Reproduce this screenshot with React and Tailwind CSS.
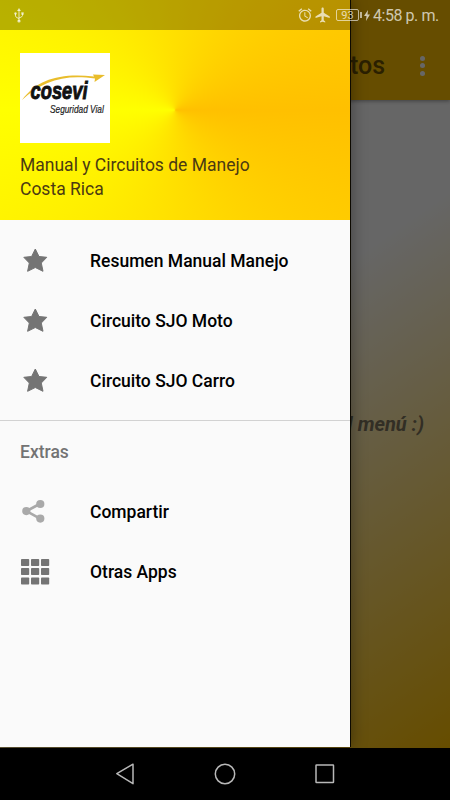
const menuItems = ['Resumen Manual Manejo', 'Circuito SJO Moto', 'Circuito SJO Carro']

export default function App() {
    return (
        <div className="relative flex h-[800px] w-[450px] flex-col overflow-hidden bg-black font-['Roboto',sans-serif]">
            <MainScreen />
            <Drawer />
            <StatusBar />
            <NavigationBar />
        </div>
    )
}

/** Activity behind the drawer, dimmed by the scrim. */
const MainScreen = () => (
    <div className="relative flex h-[748px] flex-col">
        <header className="relative z-10 flex h-[100px] items-center justify-end gap-[35px] bg-[#ffc000] pt-[31px] pr-[25px] shadow-[0_1px_4px_rgba(0,0,0,0.4)]">
            <span className="pt-px text-[25px] font-medium text-[#6b5000]">tos</span>
            <div className="flex flex-col gap-[2.5px]">
                <i className="size-[5px] rounded-full bg-white" />
                <i className="size-[5px] rounded-full bg-white" />
                <i className="size-[5px] rounded-full bg-white" />
            </div>
        </header>
        <main className="flex flex-1 items-center justify-end bg-[linear-gradient(145.2deg,#fff_0%,#fff_42%,#ffc000_100%)] pr-[26px]">
            <p className="text-[20px] font-bold italic text-[#7d745c]">l menú :)</p>
        </main>
        <div className="absolute inset-0 z-20 bg-black/60" />
    </div>
)

const Drawer = () => (
    <aside className="absolute top-0 left-0 z-30 flex h-[747px] w-[350px] flex-col bg-[#fafafa] shadow-[1px_0_0_#0c0900,2px_0_14px_rgba(0,0,0,0.35)]">
        <div className="flex h-[220px] flex-col bg-[conic-gradient(from_90deg_at_50%_50%,#ffc000,#ffff00_50%,#ffc000)] px-[20px] pt-[53px]">
            <Logo />
            <p className="mt-[10px] w-[260px] text-[17.5px] leading-[24px] text-[#4b3a12]">
                Manual y Circuitos de Manejo
                <br />
                Costa Rica
            </p>
        </div>

        <nav className="pt-[11px]">
            {menuItems.map((label) => (
                <MenuItem key={label} label={label} icon={<StarIcon />} />
            ))}
        </nav>

        <section className="mt-[9px] border-t border-[#d2d2d2]">
            <h2 className="flex h-[61px] items-center px-[20px] pt-[2px] text-[17.5px] font-medium text-[#737373]">Extras</h2>
            <MenuItem label="Compartir" icon={<ShareIcon />} />
            <MenuItem label="Otras Apps" icon={<GridIcon />} />
        </section>
    </aside>
)

const MenuItem = ({ icon, label }) => (
    <div className="flex h-[60px] items-center pl-[20px] text-[17.5px] font-medium text-black">
        <span className="w-[70px]">{icon}</span>
        <span>{label}</span>
    </div>
)

const Logo = () => (
    <svg viewBox="0 0 90 90" className="size-[90px] shrink-0 bg-white">
        <path d="M2 47 C18 26 40 20 74 23.500 L73 21.500 L85 22 L74.500 29 L75 25.500 C44 21 22 28 2 47Z" fill="#e9bd2c" />
        <text transform="translate(10.500 46) scale(0.78 1)" fontSize="23.500" fontWeight="700" fontStyle="italic" fontFamily="Liberation Sans, sans-serif" fill="#111" stroke="#111" strokeWidth="0.900">cosevi</text>
        <text transform="translate(30 60) scale(0.79 1)" fontSize="10.500" fontStyle="italic" fontFamily="Liberation Sans, sans-serif" fill="#222" stroke="#222" strokeWidth="0.200">Seguridad Vial</text>
    </svg>
)

const StarIcon = () => (
    <svg viewBox="0 1 30 30" className="size-[30px]" fill="#747474" stroke="#747474" strokeWidth="1" strokeLinejoin="round">
        <path d="M15.300 4 19 11.500 26.800 12.300 21.300 18 23 26.300 15.300 22.500 7.600 26.300 9.300 18 3.800 12.300 11.600 11.500Z" />
    </svg>
)

const ShareIcon = () => (
    <svg viewBox="0 0.700 30 30" className="size-[30px]" fill="#a9a9a9">
        <path d="M20 7.500 6.500 14.800 20 22.300" fill="none" stroke="#a9a9a9" strokeWidth="2.700" />
        <circle cx="20.300" cy="7.700" r="4.100" />
        <circle cx="6.300" cy="14.800" r="4.100" />
        <circle cx="20.300" cy="22.300" r="4.100" />
    </svg>
)

const GridIcon = () => (
    <svg viewBox="0 0 30 30" className="size-[30px]" fill="#747474">
        {[2, 11, 20.500].map((y) =>
            [1, 11, 21].map((x) => <rect key={`${x}-${y}`} x={x} y={y} width="8.200" height="7" rx="0.800" />)
        )}
    </svg>
)

const StatusBar = () => (
    <div className="absolute top-0 left-0 z-40 flex h-[30px] w-[450px] items-center text-white/70">
        <div className="absolute inset-y-0 left-0 -z-10 w-[350px] bg-black/28" />
        <svg viewBox="0 0 10 15" className="ml-[14px] h-[15px] w-[10px]" fill="none" stroke="currentColor">
            <path d="M5 2v11M1.500 5.500V8Q1.500 9.500 5 10.500M8.500 5.500V7.500Q8.500 9 5 10" strokeWidth="1" />
            <path d="M5 0 7 3H3Z" fill="currentColor" stroke="none" />
            <circle cx="1.500" cy="5.500" r="1.200" fill="currentColor" stroke="none" />
            <rect x="7.300" y="4.300" width="2.400" height="2.400" fill="currentColor" stroke="none" />
            <circle cx="5" cy="13" r="1.600" fill="currentColor" stroke="none" />
        </svg>

        {/* Alarm */}
        <svg viewBox="0 0 24 24" className="ml-[273px] size-[16px]" fill="currentColor">
            <path d="M22 5.720l-4.600-3.860-1.290 1.530 4.600 3.860L22 5.720zM7.880 3.390L6.600 1.860 2 5.710l1.290 1.530 4.590-3.850zM12.500 8H11v6l4.750 2.850.75-1.230-4-2.370V8zM12 4c-4.970 0-9 4.030-9 9s4.020 9 9 9a9 9 0 0 0 0-18zm0 16c-3.870 0-7-3.130-7-7s3.130-7 7-7 7 3.130 7 7-3.130 7-7 7z" />
        </svg>
        {/* Airplane mode */}
        <svg viewBox="0 0 24 24" className="ml-[1px] size-[18px]" fill="currentColor">
            <path d="M21 16v-2l-8-5V3.500c0-.83-.67-1.500-1.500-1.500S10 2.670 10 3.500V9l-8 5v2l8-2.500V19l-2 1.500V22l3.500-1 3.500 1v-1.500L13 19v-5.500l8 2.500z" />
        </svg>
        {/* Battery */}
        <div className="ml-[4px] flex h-[12px] w-[23px] items-center justify-center rounded-[2px] border border-white/60 text-[11px] leading-none">93</div>
        <i className="ml-px h-[6px] w-[2px] bg-white/60" />
        <svg viewBox="0 0 6 11" className="ml-[2px] h-[11px] w-[6px]" fill="currentColor">
            <path d="M4 0 0 6h2.500L2 11 6 4.500H3.500Z" />
        </svg>
        <span className="ml-[3px] pt-px text-[16px] tracking-[-0.45px] whitespace-nowrap">4:58 p. m.</span>
    </div>
)

const NavigationBar = () => (
    <footer className="relative z-40 flex h-[52px] items-center justify-between bg-black px-[114px] text-[#b8b8b8]">
        <svg viewBox="0 0 22 22" className="size-[22px]" fill="none" stroke="currentColor" strokeWidth="1.500" strokeLinejoin="round">
            <path d="M2.800 10.700 19 1.200V20.700Z" />
        </svg>
        <svg viewBox="0 0 22 22" className="size-[22px]" fill="none" stroke="currentColor" strokeWidth="1.500">
            <circle cx="11" cy="11" r="9.700" />
        </svg>
        <svg viewBox="0 0 22 22" className="size-[22px]" fill="none" stroke="currentColor" strokeWidth="1.500">
            <rect x="2" y="2" width="17.500" height="17.500" rx="0.500" />
        </svg>
    </footer>
)
